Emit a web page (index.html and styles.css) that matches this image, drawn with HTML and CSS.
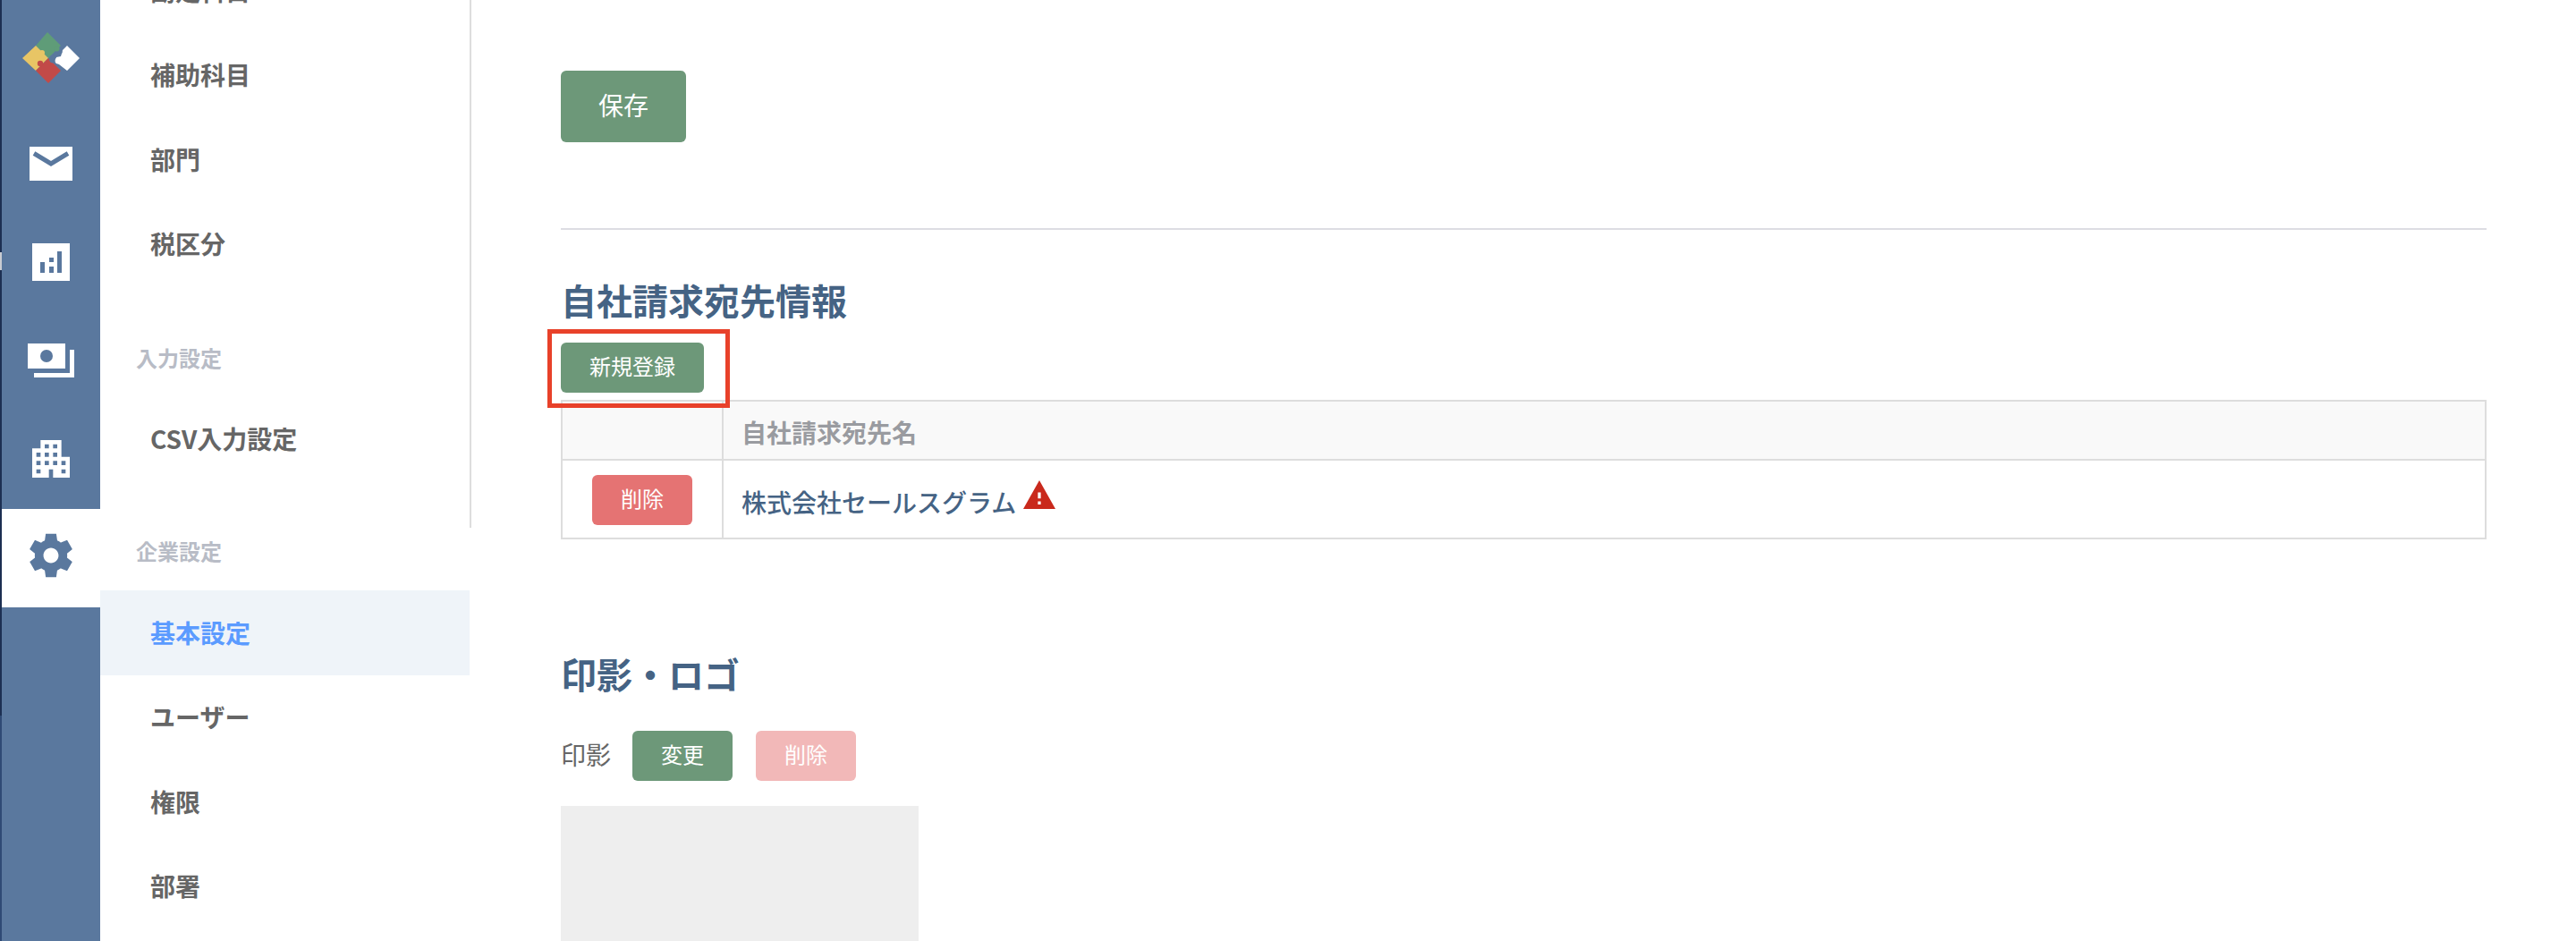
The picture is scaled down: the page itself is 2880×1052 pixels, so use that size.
FILE: index.html
```html
<!DOCTYPE html>
<html lang="ja">
<head>
<meta charset="utf-8">
<title>基本設定</title>
<link rel="stylesheet" href="styles.css">
</head>
<body>
<div class="edge"></div>
<nav class="rail">
  <div class="rail-logo">
    <svg class="logo" viewBox="25 36 64 57" width="64" height="57">
      <polygon fill="#5f9c78" points="53,36 68,51 54,65 40,51"/>
      <polygon fill="#e8c565" points="40,51 54,65 40,79 25,65"/>
      <circle fill="#e8c565" cx="47" cy="59" r="3"/>
      <polygon fill="#c24a48" points="54,65 68,79 54,93 40,79"/>
      <circle fill="#c24a48" cx="45" cy="71" r="3.2"/>
      <circle fill="#5a789e" cx="59.5" cy="66" r="4.6"/>
      <polygon fill="#ffffff" points="75,51 89,65 75,79 66,72 62,69 63,64 68,63 70,56"/>
      <circle fill="#ffffff" cx="65" cy="68" r="3.4"/>
      <circle fill="#5a789e" cx="67" cy="58" r="2.6"/>
      <circle fill="#5f9c78" cx="63.5" cy="54.5" r="3"/>
    </svg>
  </div>
  <div class="rail-item">
    <svg viewBox="0 0 48 38" width="48" height="38">
      <rect width="48" height="38" fill="#fff"/>
      <path d="M5 7.5 24 19 43 7.5" fill="none" stroke="#5a789e" stroke-width="5"/>
    </svg>
  </div>
  <div class="rail-item">
    <svg viewBox="0 0 42 42" width="42" height="42">
      <rect width="42" height="42" fill="#fff"/>
      <path fill="#5a789e" d="M9 21h5v12H9zM19 16h5v5h-5zM19 26h5v7h-5zM28 9h5v24h-5z"/>
    </svg>
  </div>
  <div class="rail-item">
    <svg viewBox="0 0 52 38" width="52" height="38">
      <path fill="#fff" d="M0 0h42v28H0zM47 7h5v31H7v-5h40z"/>
      <circle cx="21" cy="14" r="7" fill="#5a789e"/>
    </svg>
  </div>
  <div class="rail-item">
    <svg viewBox="0 0 24 24" width="56" height="56">
      <path fill="#fff" d="M17 11V3H7v4H3v14h8v-4h2v4h8V11h-4zM7 19H5v-2h2v2zm0-4H5v-2h2v2zm0-4H5V9h2v2zm4 4H9v-2h2v2zm0-4H9V9h2v2zm0-4H9V5h2v2zm4 8h-2v-2h2v2zm0-4h-2V9h2v2zm0-4h-2V5h2v2zm4 12h-2v-2h2v2zm0-4h-2v-2h2v2z"/>
    </svg>
  </div>
  <div class="rail-item rail-active">
    <svg viewBox="0 0 24 24" width="58" height="58">
      <path fill="#5a789e" d="M19.44 12.99l-.01.02c.04-.33.08-.67.08-1.01 0-.34-.03-.66-.07-.99l.01.02 2.44-1.92-2.43-4.22-2.87 1.16.01.01c-.52-.4-1.09-.74-1.71-1h.01L14.44 2H9.57l-.44 3.07h.01c-.62.26-1.19.6-1.71 1l.01-.01-2.88-1.17-2.44 4.22 2.44 1.92.01-.02c-.04.33-.07.65-.07.99 0 .34.03.68.08 1.01l-.01-.02-2.1 1.65-.33.26 2.43 4.2 2.88-1.15-.02-.04c.53.41 1.1.75 1.73 1.01h-.03L9.58 22h4.85s.03-.18.06-.42l.38-2.65h-.01c.62-.26 1.2-.6 1.73-1.01l-.02.04 2.88 1.15 2.43-4.2s-.14-.12-.33-.26l-2.11-1.66zM12 15.5c-1.93 0-3.5-1.57-3.5-3.5s1.57-3.5 3.5-3.5 3.5 1.57 3.5 3.5-1.57 3.5-3.5 3.5z"/>
    </svg>
  </div>
</nav>
<aside class="menu">
  <div class="menu-upper">
    <a class="menu-row">勘定科目</a>
    <a class="menu-row">補助科目</a>
    <a class="menu-row">部門</a>
    <a class="menu-row">税区分</a>
    <div class="menu-label menu-label-first">入力設定</div>
    <a class="menu-row">CSV入力設定</a>
  </div>
  <div class="menu-lower">
    <div class="menu-label menu-label-second">企業設定</div>
    <a class="menu-row menu-row-active">基本設定</a>
    <a class="menu-row">ユーザー</a>
    <a class="menu-row">権限</a>
    <a class="menu-row">部署</a>
  </div>
</aside>
<main class="content">
  <button class="btn btn-save">保存</button>
  <hr class="rule">
  <h2 class="title title-first">自社請求宛先情報</h2>
  <div class="highlight"><button class="btn btn-small btn-wide">新規登録</button></div>
  <table class="grid">
    <thead>
      <tr><th class="col-action"></th><th class="col-name">自社請求宛先名</th></tr>
    </thead>
    <tbody>
      <tr>
        <td class="cell-action"><button class="btn btn-small btn-danger">削除</button></td>
        <td class="cell-name">
          <div class="name-line">
            <span>株式会社セールスグラム</span>
            <svg class="warn" viewBox="1 2 22 19" width="36" height="32" preserveAspectRatio="none">
              <path fill="#c9291c" d="M1 21h22L12 2 1 21zm12-3h-2v-2h2v2zm0-4h-2v-4h2v4z"/>
            </svg>
          </div>
        </td>
      </tr>
    </tbody>
  </table>
  <h2 class="title title-second">印影・ロゴ</h2>
  <div class="stamp-row">
    <span class="stamp-label">印影</span>
    <button class="btn btn-small btn-stamp">変更</button>
    <button class="btn btn-small btn-stamp btn-danger-muted">削除</button>
  </div>
  <div class="stamp-box"></div>
</main>
</body>
</html>
```
FILE: styles.css
```css
* { box-sizing: border-box; }
html, body { margin: 0; height: 100%; }
body {
  display: flex;
  height: 1052px;
  overflow: hidden;
  background: #fff;
  font-family: "Noto Sans CJK JP", "Noto Sans", sans-serif;
  color: #666;
}
.edge {
  flex: 0 0 2px;
  background: linear-gradient(#1c2f52 0 282px, #c9ccd2 282px 302px, #1c2f52 302px 800px, #2f4a75 800px);
}
.rail {
  flex: 0 0 110px;
  background: #5a789e;
  display: flex;
  flex-direction: column;
}
.rail-logo {
  height: 128px;
  padding-top: 36px;
  display: flex;
  justify-content: center;
}
.rail-item {
  height: 110px;
  display: flex;
  align-items: center;
  justify-content: center;
}
.rail-active {
  margin-top: 1px;
  background: #fff;
  padding-bottom: 6px;
}
.menu {
  flex: 0 0 415px;
  display: flex;
  flex-direction: column;
}
.menu-upper {
  margin-top: -58px;
  height: 648px;
  flex: none;
  border-right: 2px solid #ddd;
}
.menu-lower { width: 413px; }
.menu-row {
  display: flex;
  align-items: center;
  height: 94.5px;
  padding-left: 56px;
  padding-bottom: 1px;
  font-size: 28px;
  font-weight: 700;
  color: #666;
}
.menu-row-active {
  background: #eff4f9;
  color: #5b9bff;
}
.menu-label {
  display: flex;
  align-items: center;
  padding-left: 40px;
  font-size: 24px;
  font-weight: 700;
  color: #b8bcc6;
}
.menu-label-first {
  height: 40px;
  margin-top: 59px;
  margin-bottom: 24px;
}
.menu-label-second {
  height: 50px;
  margin-bottom: 20px;
}
.content {
  flex: 1;
  min-width: 0;
  padding: 79px 100px 0;
}
.btn {
  display: block;
  border: 0;
  margin: 0;
  padding: 0 0 5px;
  border-radius: 6px;
  background: #6d9879;
  color: #fff;
  font-family: inherit;
  font-size: 24px;
}
.btn-save {
  width: 140px;
  height: 80px;
  font-size: 28px;
}
.btn-small { height: 56px; }
.btn-wide { width: 160px; }
.btn-stamp { width: 112px; }
.btn-danger {
  width: 112px;
  margin: 0 auto;
  background: #e57373;
}
.btn-danger-muted { background: #f2b8b8; }
.rule {
  height: 2px;
  margin: 96px 0 0;
  border: 0;
  background: #dddde3;
}
.title {
  margin: 0;
  height: 60px;
  line-height: 60px;
  font-size: 40px;
  font-weight: 700;
  color: #456384;
}
.title-first { margin-top: 48px; }
.title-second { margin-top: 120px; }
.highlight {
  position: relative;
  width: 160px;
  margin-top: 18px;
}
.highlight::after {
  content: "";
  position: absolute;
  top: -15px;
  left: -15px;
  right: -29px;
  bottom: -17px;
  border: 5px solid #e8412a;
  z-index: 2;
}
.grid {
  width: 100%;
  margin-top: 8px;
  border-collapse: collapse;
  table-layout: fixed;
}
.grid th, .grid td {
  border: 2px solid #ddd;
  padding: 0;
}
.grid thead th {
  height: 66px;
  padding-top: 3px;
  background: #f9f9f9;
  color: #999ba0;
  font-size: 28px;
  font-weight: 700;
  text-align: left;
}
.grid tbody td { height: 88px; }
.grid tbody .cell-action { padding-top: 2px; }
.col-action { width: 180px; }
.grid .col-name, .grid .cell-name { padding-left: 20px; }
.name-line {
  display: flex;
  align-items: center;
  gap: 8px;
  padding-top: 6px;
  font-size: 28px;
  font-weight: 500;
  color: #456384;
}
.warn { margin-top: -16px; }
.stamp-row {
  display: flex;
  align-items: center;
  margin-top: 34px;
}
.stamp-label {
  width: 56px;
  margin-right: 24px;
  margin-bottom: 4px;
  font-size: 28px;
  color: #666;
}
.stamp-row .btn + .btn { margin-left: 26px; }
.stamp-box {
  width: 400px;
  height: 400px;
  margin-top: 28px;
  background: #eee;
}
```
